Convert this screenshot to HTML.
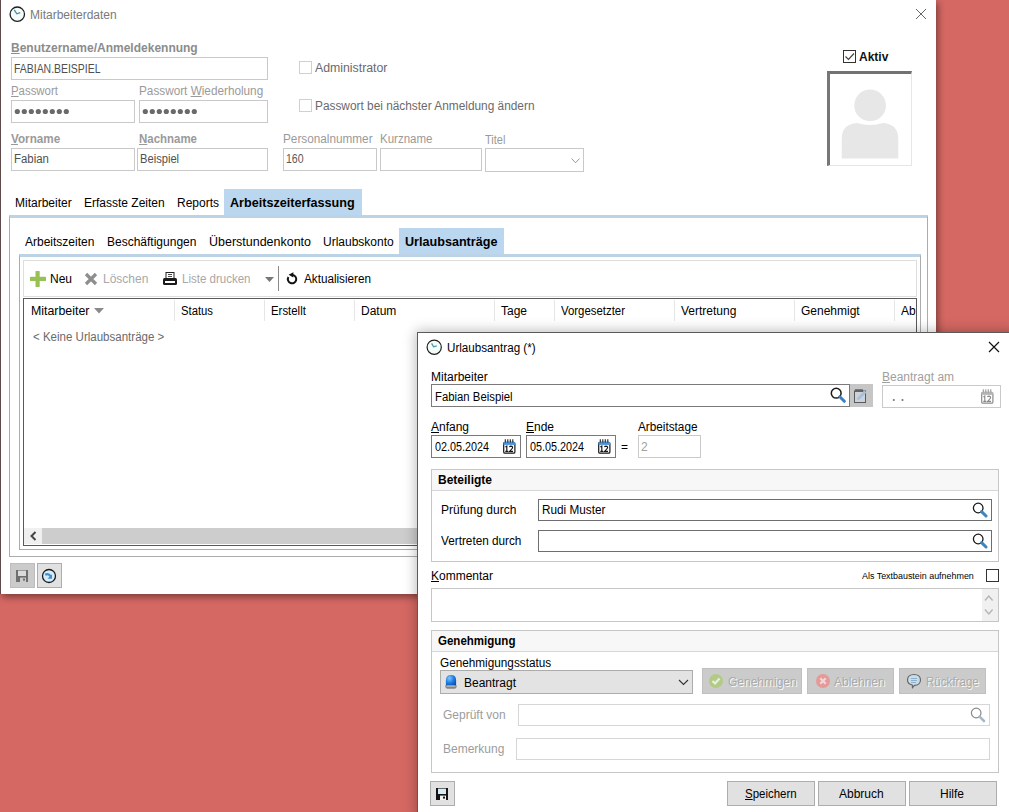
<!DOCTYPE html>
<html><head><meta charset="utf-8">
<style>
*{box-sizing:border-box}
html,body{margin:0;padding:0}
body{width:1009px;height:812px;position:relative;overflow:hidden;background:#d56863;font-family:"Liberation Sans",sans-serif;font-size:12px;color:#000}
.a{position:absolute}
.t{position:absolute;white-space:nowrap;line-height:14px;transform-origin:0 0}
.box{position:absolute;border:1px solid #abadb3;background:#fff}
.u{text-decoration:underline}
.b{font-weight:bold}
.dis{color:#aaaaaa;text-shadow:1px 1px 0 #f8f8f8}
</style></head><body>

<!-- ============ MAIN WINDOW ============ -->
<div class="a" style="left:0;top:0;width:936px;height:594px;background:#fff;box-shadow:2px 3px 7px rgba(0,0,0,0.42)"></div>
<div class="a" style="left:0;top:0;width:1px;height:594px;background:#5e4a4a"></div>
<!-- title -->
<svg class="a" style="left:9px;top:6px" width="17" height="17" viewBox="0 0 17 17"><circle cx="8.3" cy="8.2" r="7.2" fill="#f3fbfb" stroke="#1e1e1e" stroke-width="1.3"/><path d="M5.2 3.8 L7.8 7.8 L11.2 6.6" fill="none" stroke="#4f8f98" stroke-width="1.3"/></svg>
<div class="t" style="left:30px;top:8px;color:#7a7a7a">Mitarbeiterdaten</div>
<svg class="a" style="left:915px;top:8px" width="12" height="12" viewBox="0 0 12 12"><path d="M1 1 L11 11 M11 1 L1 11" stroke="#666" stroke-width="1"/></svg>

<!-- fields -->
<div class="t b" style="left:11px;top:41px;color:#8c8c8c"><span class="u">B</span>enutzername/Anmeldekennung</div>
<div class="box" style="left:11px;top:57px;width:257px;height:23px;border-color:#c9c9c9"></div>
<div class="t" style="left:14px;top:62px;color:#505050;transform:scaleX(0.87)">FABIAN.BEISPIEL</div>

<div class="t" style="left:11px;top:84px;color:#9a9a9a;transform:scaleX(0.95)"><span class="u">P</span>asswort</div>
<div class="t" style="left:139px;top:84px;color:#9a9a9a;transform:scaleX(0.98)">Passwort <span class="u">W</span>iederholung</div>
<div class="box" style="left:11px;top:100px;width:124px;height:23px;border-color:#c9c9c9"></div>
<div class="box" style="left:139px;top:100px;width:129px;height:23px;border-color:#c9c9c9"></div>
<svg class="a" style="left:14px;top:108px" width="60" height="8"><g fill="#6a6a6a"><circle cx="3.3" cy="3.5" r="2.6"/><circle cx="10.3" cy="3.5" r="2.6"/><circle cx="17.3" cy="3.5" r="2.6"/><circle cx="24.3" cy="3.5" r="2.6"/><circle cx="31.3" cy="3.5" r="2.6"/><circle cx="38.3" cy="3.5" r="2.6"/><circle cx="45.3" cy="3.5" r="2.6"/><circle cx="52.3" cy="3.5" r="2.6"/></g></svg>
<svg class="a" style="left:142px;top:108px" width="60" height="8"><g fill="#6a6a6a"><circle cx="3.3" cy="3.5" r="2.6"/><circle cx="10.3" cy="3.5" r="2.6"/><circle cx="17.3" cy="3.5" r="2.6"/><circle cx="24.3" cy="3.5" r="2.6"/><circle cx="31.3" cy="3.5" r="2.6"/><circle cx="38.3" cy="3.5" r="2.6"/><circle cx="45.3" cy="3.5" r="2.6"/><circle cx="52.3" cy="3.5" r="2.6"/></g></svg>

<div class="t b" style="left:11px;top:132px;color:#9a9a9a;transform:scaleX(0.975)"><span class="u">V</span>orname</div>
<div class="t b" style="left:139px;top:132px;color:#9a9a9a;transform:scaleX(0.955)"><span class="u">N</span>achname</div>
<div class="box" style="left:11px;top:148px;width:124px;height:23px;border-color:#c9c9c9"></div>
<div class="box" style="left:137px;top:148px;width:131px;height:23px;border-color:#c9c9c9"></div>
<div class="t" style="left:14px;top:152px;color:#505050;transform:scaleX(0.95)">Fabian</div>
<div class="t" style="left:140px;top:152px;color:#505050;transform:scaleX(0.93)">Beispiel</div>

<div class="a" style="left:299px;top:61px;width:13px;height:13px;border:1px solid #d0d0d0"></div>
<div class="t" style="left:315px;top:61px;color:#6a6a6a;transform:scaleX(1.025)">Administrator</div>
<div class="a" style="left:299px;top:99px;width:13px;height:13px;border:1px solid #d0d0d0"></div>
<div class="t" style="left:315px;top:99px;color:#6a6a6a;transform:scaleX(0.988)">Passwort bei nächster Anmeldung ändern</div>

<div class="t" style="left:283px;top:132px;color:#9a9a9a;transform:scaleX(0.98)">Personalnummer</div>
<div class="t" style="left:380px;top:132px;color:#9a9a9a;transform:scaleX(0.96)">Kurzname</div>
<div class="t" style="left:485px;top:133px;color:#9a9a9a;transform:scaleX(0.92)">Titel</div>
<div class="box" style="left:283px;top:148px;width:94px;height:23px;border-color:#c9c9c9"></div>
<div class="t" style="left:286px;top:152px;color:#5a5a5a;transform:scaleX(0.88)">160</div>
<div class="box" style="left:380px;top:148px;width:102px;height:23px;border-color:#c9c9c9"></div>
<div class="box" style="left:485px;top:148px;width:99px;height:24px;border-color:#c9c9c9"></div>
<svg class="a" style="left:571px;top:158px" width="9" height="6"><path d="M0.5 0.5 L4.5 4.8 L8.5 0.5" fill="none" stroke="#9a9a9a" stroke-width="1"/></svg>

<!-- Aktiv + photo -->
<div class="a" style="left:843px;top:50px;width:13px;height:13px;border:1px solid #333;background:#fff"></div>
<svg class="a" style="left:844px;top:51px" width="11" height="11"><path d="M1.5 5.5 L4.5 8.5 L10 2.5" fill="none" stroke="#444" stroke-width="1.2"/></svg>
<div class="t b" style="left:859px;top:50px;color:#111">Aktiv</div>
<div class="a" style="left:827px;top:71px;width:85px;height:95px;border-top:3px solid #727272;border-left:3px solid #777;border-right:1px solid #e6e6e6;border-bottom:1px solid #e6e6e6;background:#fff"></div>
<svg class="a" style="left:840px;top:89px" width="60" height="71" viewBox="0 0 60 71"><circle cx="30.1" cy="16.4" r="15.8" fill="#e7e7e7"/><path d="M1.7 69.5 L1.7 50 Q1.7 35 17 34 Q30 38 43 34 Q58.3 35 58.3 50 L58.3 69.5 Z" fill="#e7e7e7"/></svg>

<!-- tabs -->
<div class="a" style="left:224px;top:189px;width:138px;height:27px;background:#bad7ef"></div>
<div class="t" style="left:15px;top:196px">Mitarbeiter</div>
<div class="t" style="left:84px;top:196px">Erfasste Zeiten</div>
<div class="t" style="left:177px;top:196px">Reports</div>
<div class="t b" style="left:230px;top:196px;transform:scaleX(1.05)">Arbeitszeiterfassung</div>
<div class="a" style="left:9px;top:215px;width:919px;height:342px;border:1px solid #acacac;border-top:3px solid #bcd3e6"></div>

<div class="a" style="left:399px;top:228px;width:105px;height:27px;background:#bad7ef"></div>
<div class="t" style="left:25px;top:235px">Arbeitszeiten</div>
<div class="t" style="left:107px;top:235px">Beschäftigungen</div>
<div class="t" style="left:209px;top:235px;transform:scaleX(1.04)">Überstundenkonto</div>
<div class="t" style="left:323px;top:235px">Urlaubskonto</div>
<div class="t b" style="left:405px;top:235px;transform:scaleX(1.05)">Urlaubsanträge</div>
<div class="a" style="left:19px;top:254px;width:902px;height:296px;border:1px solid #acacac;border-top:3px solid #bcd3e6"></div>

<!-- toolbar -->
<div class="a" style="left:23px;top:260px;width:894px;height:37px;border:1px solid #dedede"></div>
<svg class="a" style="left:30px;top:271px" width="16" height="16" viewBox="0 0 16 16"><path d="M7.6 1.2 V14.8 M1.2 7.8 H14.8" stroke="#97c155" stroke-width="4.2" stroke-linecap="round"/></svg>
<div class="t" style="left:50px;top:272px">Neu</div>
<svg class="a" style="left:84px;top:272px" width="14" height="14" viewBox="0 0 14 14"><path d="M2 2 L12 12 M12 2 L2 12" stroke="#8e8e8e" stroke-width="3.2"/></svg>
<div class="t" style="left:103px;top:272px;color:#a8a8a8">Löschen</div>
<svg class="a" style="left:162px;top:272px" width="16" height="14" viewBox="0 0 16 14"><rect x="4" y="0.5" width="8" height="6" fill="#fff" stroke="#222" stroke-width="1"/><path d="M6 2.5 H10 M6 4.5 H10" stroke="#222" stroke-width="0.8"/><rect x="1" y="6" width="14" height="7" rx="1.5" fill="#1a1a1a"/><rect x="3" y="9" width="10" height="2" fill="#fff"/></svg>
<div class="t" style="left:182px;top:272px;color:#a8a8a8;transform:scaleX(0.96)">Liste drucken</div>
<svg class="a" style="left:265px;top:277px" width="9" height="5"><path d="M0 0 H9 L4.5 5 Z" fill="#777"/></svg>
<div class="a" style="left:278px;top:266px;width:1px;height:25px;background:#8a8a8a"></div>
<svg class="a" style="left:286px;top:272px" width="12" height="13" viewBox="0 0 12 13"><path d="M6.2 2.9 A4.2 4.2 0 1 1 2.4 5" fill="none" stroke="#111" stroke-width="2"/><path d="M2.6 2.8 L7.4 0.2 L7.3 5.6Z" fill="#111"/></svg>
<div class="t" style="left:304px;top:272px;transform:scaleX(0.975)">Aktualisieren</div>

<!-- grid -->
<div class="a" style="left:23px;top:298px;width:894px;height:248px;border:1px solid #5a5a5a"></div>
<div class="t" style="left:31px;top:304px;transform:scaleX(1.03)">Mitarbeiter</div>
<svg class="a" style="left:94px;top:308px" width="10" height="6"><path d="M0 0 H10 L5 5.5 Z" fill="#8a8a8a"/></svg>
<div class="a" style="left:174px;top:300px;width:1px;height:21px;background:#e6e6e6"></div>
<div class="t" style="left:181px;top:304px;transform:scaleX(0.94)">Status</div>
<div class="a" style="left:264px;top:300px;width:1px;height:21px;background:#e6e6e6"></div>
<div class="t" style="left:271px;top:304px;transform:scaleX(0.95)">Erstellt</div>
<div class="a" style="left:354px;top:300px;width:1px;height:21px;background:#e6e6e6"></div>
<div class="t" style="left:361px;top:304px">Datum</div>
<div class="a" style="left:494px;top:300px;width:1px;height:21px;background:#e6e6e6"></div>
<div class="t" style="left:501px;top:304px">Tage</div>
<div class="a" style="left:554px;top:300px;width:1px;height:21px;background:#e6e6e6"></div>
<div class="t" style="left:561px;top:304px;transform:scaleX(0.95)">Vorgesetzter</div>
<div class="a" style="left:674px;top:300px;width:1px;height:21px;background:#e6e6e6"></div>
<div class="t" style="left:681px;top:304px">Vertretung</div>
<div class="a" style="left:794px;top:300px;width:1px;height:21px;background:#e6e6e6"></div>
<div class="t" style="left:801px;top:304px">Genehmigt</div>
<div class="a" style="left:894px;top:300px;width:1px;height:21px;background:#e6e6e6"></div>
<div class="a" style="left:901px;top:304px;width:15px;height:16px;overflow:hidden"><div class="t" style="left:0;top:0">Ab</div></div>
<div class="t" style="left:33px;top:330px;color:#6a6a6a;transform:scaleX(0.96)">&lt; Keine Urlaubsanträge &gt;</div>

<!-- scrollbar -->
<div class="a" style="left:24px;top:528px;width:18px;height:16px;background:#f0f0f0"></div>
<div class="a" style="left:42px;top:528px;width:375px;height:16px;background:#cdcdcd"></div>
<svg class="a" style="left:29px;top:531px" width="9" height="10"><path d="M6.5 1 L2.5 5 L6.5 9" fill="none" stroke="#444" stroke-width="2"/></svg>

<!-- bottom buttons -->
<div class="a" style="left:10px;top:563px;width:25px;height:25px;background:#cbcbcb;border:1px solid #bdbdbd"></div>
<svg class="a" style="left:16px;top:570px" width="12" height="12" viewBox="0 0 12 12"><rect x="0" y="0" width="12" height="12" fill="#6e6e6e"/><rect x="2" y="0.6" width="8" height="5.4" fill="#dadada"/><rect x="4" y="7.6" width="6" height="4.4" fill="#cbcbcb"/><rect x="7" y="8.6" width="2" height="2" fill="#6e6e6e"/></svg>
<div class="a" style="left:37px;top:563px;width:25px;height:25px;background:#e1e1e1;border:1px solid #adadad"></div>
<svg class="a" style="left:41px;top:568px" width="16" height="16" viewBox="0 0 16 16"><circle cx="8" cy="8" r="6.5" fill="#d6ecfa" stroke="#1a1a1a" stroke-width="1.3"/><path d="M4.2 6.8 Q7.5 4.8 9.8 8.5" fill="none" stroke="#3b8fd3" stroke-width="2.2"/><path d="M6.5 10.8 L11 10.8 L11 6.3Z" fill="#3b8fd3"/></svg>

<!-- ============ DIALOG ============ -->
<div class="a" style="left:417px;top:332px;width:600px;height:490px;background:#fff;border-left:1px solid #5a5a5a;border-top:1px solid #5a5a5a;box-shadow:-1px -1px 12px rgba(0,0,0,0.28)"></div>
<svg class="a" style="left:426px;top:339px" width="17" height="17" viewBox="0 0 17 17"><circle cx="8.2" cy="8.2" r="7.1" fill="#f3fbfb" stroke="#1e1e1e" stroke-width="1.2"/><path d="M5.6 4.4 L7.6 7.8 L10.8 6.8" fill="none" stroke="#4f9aa0" stroke-width="1.3"/></svg>
<div class="t" style="left:447px;top:341px;transform:scaleX(0.97)">Urlaubsantrag (*)</div>
<svg class="a" style="left:988px;top:341px" width="12" height="12" viewBox="0 0 12 12"><path d="M1 1 L11 11 M11 1 L1 11" stroke="#111" stroke-width="1.2"/></svg>

<div class="t" style="left:431px;top:370px">Mitarbeiter</div>
<div class="box" style="left:431px;top:384px;width:419px;height:23px;border-color:#7a7a7a"></div>
<div class="t" style="left:435px;top:390px;transform:scaleX(0.945)">Fabian Beispiel</div>
<svg class="a" style="left:830px;top:387px" width="16" height="16" viewBox="0 0 16 16"><circle cx="6.2" cy="6.2" r="4.9" fill="#fff" stroke="#1a1a1a" stroke-width="1.5"/><path d="M9.8 9.8 L14.3 14.3" stroke="#3d7fbf" stroke-width="3" stroke-linecap="round"/></svg>
<div class="a" style="left:850px;top:384px;width:23px;height:23px;background:#c6c6c6"></div>
<svg class="a" style="left:853px;top:388px" width="16" height="16" viewBox="0 0 16 16"><rect x="1.5" y="3" width="11" height="11.5" fill="#cdd3d8" stroke="#5a5a5a"/><path d="M3 1 V4 M5 1 V4 M7 1 V4 M9 1 V4" stroke="#333"/><path d="M4.5 11.5 L12.5 3.5" stroke="#a3c2dc" stroke-width="2.8"/></svg>

<div class="t" style="left:882px;top:370px;color:#a0a0a0"><span class="u">B</span>eantragt am</div>
<div class="box" style="left:882px;top:385px;width:119px;height:23px;border-color:#cacaca"></div>
<svg class="a" style="left:892px;top:398px" width="14" height="4"><circle cx="1.8" cy="2" r="1.1" fill="#777"/><circle cx="10.5" cy="2" r="1.1" fill="#777"/></svg>
<svg class="a" style="left:981px;top:389px" width="13" height="15" viewBox="0 0 13 15"><rect x="0.7" y="3.4" width="11.2" height="10.8" rx="1.3" fill="#fff" stroke="#8a8a8a" stroke-width="1.2"/><rect x="0.5" y="3" width="11.6" height="2.9" fill="#b5b5b5"/><path d="M2.3 0.3 V3.6 M4.8 0.3 V3.6 M7.3 0.3 V3.6 M9.8 0.3 V3.6" stroke="#999" stroke-width="1.1"/><path d="M2.4 8 L3.8 7.1 V12.4 M2.3 12.4 H5.2 M6.4 8 Q6.9 7.1 8.1 7.1 Q9.6 7.2 9.6 8.5 Q9.6 9.4 6.6 12.3 H10" fill="none" stroke="#8a8a8a" stroke-width="1.15"/></svg>

<div class="t" style="left:431px;top:420px"><span class="u">A</span>nfang</div>
<div class="t" style="left:526px;top:420px"><span class="u">E</span>nde</div>
<div class="t" style="left:638px;top:420px;transform:scaleX(0.98)">Arbeitstage</div>
<div class="box" style="left:431px;top:435px;width:90px;height:23px;border-color:#7a7a7a"></div>
<div class="t" style="left:435px;top:440px;transform:scaleX(0.9)">02.05.2024</div>
<svg class="a" style="left:503px;top:439px" width="13" height="15" viewBox="0 0 13 15"><rect x="0.7" y="3.4" width="11.2" height="10.8" rx="1.3" fill="#fff" stroke="#141414" stroke-width="1.2"/><rect x="0.5" y="3" width="11.6" height="2.9" fill="#4a93d4"/><path d="M2.3 0.3 V3.6 M4.8 0.3 V3.6 M7.3 0.3 V3.6 M9.8 0.3 V3.6" stroke="#222" stroke-width="1.1"/><path d="M2.4 8 L3.8 7.1 V12.4 M2.3 12.4 H5.2 M6.4 8 Q6.9 7.1 8.1 7.1 Q9.6 7.2 9.6 8.5 Q9.6 9.4 6.6 12.3 H10" fill="none" stroke="#141414" stroke-width="1.15"/></svg>
<div class="box" style="left:526px;top:435px;width:90px;height:23px;border-color:#7a7a7a"></div>
<div class="t" style="left:530px;top:440px;transform:scaleX(0.9)">05.05.2024</div>
<svg class="a" style="left:598px;top:439px" width="13" height="15" viewBox="0 0 13 15"><rect x="0.7" y="3.4" width="11.2" height="10.8" rx="1.3" fill="#fff" stroke="#141414" stroke-width="1.2"/><rect x="0.5" y="3" width="11.6" height="2.9" fill="#4a93d4"/><path d="M2.3 0.3 V3.6 M4.8 0.3 V3.6 M7.3 0.3 V3.6 M9.8 0.3 V3.6" stroke="#222" stroke-width="1.1"/><path d="M2.4 8 L3.8 7.1 V12.4 M2.3 12.4 H5.2 M6.4 8 Q6.9 7.1 8.1 7.1 Q9.6 7.2 9.6 8.5 Q9.6 9.4 6.6 12.3 H10" fill="none" stroke="#141414" stroke-width="1.15"/></svg>
<div class="t" style="left:621px;top:440px">=</div>
<div class="box" style="left:638px;top:435px;width:63px;height:23px;border-color:#cacaca"></div>
<div class="t" style="left:641px;top:440px;color:#a0a0a0">2</div>

<!-- Beteiligte -->
<div class="a" style="left:431px;top:469px;width:568px;height:93px;border:1px solid #c6c6c6"></div>
<div class="a" style="left:432px;top:470px;width:566px;height:21px;background:#f7f7f7;border-bottom:1px solid #d6d6d6"></div>
<div class="t b" style="left:438px;top:473px">Beteiligte</div>
<div class="t" style="left:441px;top:503px">Prüfung durch</div>
<div class="box" style="left:538px;top:499px;width:454px;height:22px;border-color:#6e6e6e"></div>
<div class="t" style="left:542px;top:503px;transform:scaleX(0.98)">Rudi Muster</div>
<svg class="a" style="left:972px;top:502px" width="16" height="16" viewBox="0 0 16 16"><circle cx="6.2" cy="6" r="4.8" fill="#fff" stroke="#1a1a1a" stroke-width="1.3"/><path d="M9.6 9.6 L14 14" stroke="#3f86bd" stroke-width="3" stroke-linecap="round"/></svg>
<div class="t" style="left:441px;top:534px;transform:scaleX(0.98)">Vertreten durch</div>
<div class="box" style="left:538px;top:530px;width:454px;height:22px;border-color:#6e6e6e"></div>
<svg class="a" style="left:972px;top:533px" width="16" height="16" viewBox="0 0 16 16"><circle cx="6.2" cy="6" r="4.8" fill="#fff" stroke="#1a1a1a" stroke-width="1.3"/><path d="M9.6 9.6 L14 14" stroke="#3f86bd" stroke-width="3" stroke-linecap="round"/></svg>

<!-- Kommentar -->
<div class="t" style="left:431px;top:569px"><span class="u">K</span>ommentar</div>
<div class="t" style="left:862px;top:570px;font-size:9.2px;line-height:12px;transform:scaleX(0.97)">Als Textbaustein aufnehmen</div>
<div class="a" style="left:986px;top:569px;width:13px;height:13px;border:1px solid #333"></div>
<div class="box" style="left:431px;top:588px;width:568px;height:34px;border-color:#c6c6c6"></div>
<div class="a" style="left:982px;top:589px;width:16px;height:32px;background:#f0f0f0"></div>
<svg class="a" style="left:984px;top:593px" width="10" height="24"><path d="M1 7.5 L4.8 3 L8.6 7.5 M1 16.5 L4.8 21 L8.6 16.5" fill="none" stroke="#b5b5b5" stroke-width="1.4"/></svg>

<!-- Genehmigung -->
<div class="a" style="left:431px;top:630px;width:568px;height:143px;border:1px solid #c6c6c6"></div>
<div class="a" style="left:432px;top:631px;width:566px;height:21px;background:#f7f7f7;border-bottom:1px solid #d6d6d6"></div>
<div class="t b" style="left:438px;top:634px;transform:scaleX(0.96)">Genehmigung</div>
<div class="t" style="left:440px;top:656px;transform:scaleX(0.98)">Genehmigungsstatus</div>
<div class="a" style="left:440px;top:670px;width:253px;height:24px;background:#e3e3e3;border:1px solid #acacac"></div>
<svg class="a" style="left:444px;top:674px" width="14" height="16" viewBox="0 0 14 16"><defs><radialGradient id="bl" cx="0.35" cy="0.3" r="0.8"><stop offset="0" stop-color="#7cc8ff"/><stop offset="0.55" stop-color="#1f7ae0"/><stop offset="1" stop-color="#0d4aa8"/></radialGradient></defs><path d="M1.9 12 L1.9 6.2 Q1.9 1 7 1 Q12.1 1 12.1 6.2 L12.1 12Z" fill="url(#bl)"/><path d="M1.2 11.6 H12.8 Q12.8 14.7 10.5 14.7 H3.5 Q1.2 14.7 1.2 11.6Z" fill="#8a8480"/><path d="M2.5 12 H11.5" stroke="#d8eef8" stroke-width="0.8"/></svg>
<div class="t" style="left:464px;top:676px">Beantragt</div>
<svg class="a" style="left:678px;top:679px" width="11" height="7"><path d="M1 1 L5.5 5.5 L10 1" fill="none" stroke="#333" stroke-width="1.1"/></svg>

<div class="a" style="left:702px;top:668px;width:100px;height:26px;background:#cbcbcb;border:1px solid #c0c0c0"></div>
<svg class="a" style="left:708px;top:673px" width="16" height="16" viewBox="0 0 16 16"><circle cx="8" cy="8" r="7" fill="#b3ca86"/><path d="M4.5 8 L7 10.5 L11.5 5.5" fill="none" stroke="#e8f0dc" stroke-width="2.2"/></svg>
<div class="t dis" style="left:728px;top:675px">Genehmigen</div>
<div class="a" style="left:807px;top:668px;width:87px;height:26px;background:#cbcbcb;border:1px solid #c0c0c0"></div>
<svg class="a" style="left:815px;top:673px" width="16" height="16" viewBox="0 0 16 16"><circle cx="8" cy="8" r="7" fill="#e49a98"/><path d="M5.3 5.3 L10.7 10.7 M10.7 5.3 L5.3 10.7" stroke="#f4d6d6" stroke-width="2.2"/></svg>
<div class="t dis" style="left:834px;top:675px">Ablehnen</div>
<div class="a" style="left:899px;top:668px;width:87px;height:26px;background:#cbcbcb;border:1px solid #c0c0c0"></div>
<svg class="a" style="left:906px;top:673px" width="16" height="16" viewBox="0 0 16 16"><path d="M8 1.5 C12 1.5 14.5 3.8 14.5 7 C14.5 10.2 12 12.3 8.5 12.3 L6.5 14.5 L6.3 12 C3.3 11.4 1.5 9.5 1.5 7 C1.5 3.8 4 1.5 8 1.5Z" fill="#c9dcea" stroke="#666" stroke-width="1.2"/><path d="M5 5.5 H11 M5 7.5 H11 M5 9.5 H10" stroke="#8fb0cc" stroke-width="1"/></svg>
<div class="t dis" style="left:926px;top:675px;transform:scaleX(0.965)">Rückfrage</div>

<div class="t" style="left:443px;top:708px;color:#9c9c9c">Geprüft von</div>
<div class="box" style="left:518px;top:704px;width:472px;height:22px;border-color:#d6d6d6"></div>
<svg class="a" style="left:970px;top:707px" width="16" height="16" viewBox="0 0 16 16"><circle cx="6.2" cy="6" r="4.8" fill="#fff" stroke="#8a8a8a" stroke-width="1.2"/><path d="M9.6 9.6 L14 14" stroke="#a8b8c6" stroke-width="2.6" stroke-linecap="round"/></svg>
<div class="t" style="left:443px;top:742px;color:#9c9c9c">Bemerkung</div>
<div class="box" style="left:516px;top:738px;width:474px;height:22px;border-color:#d6d6d6"></div>

<!-- bottom -->
<div class="a" style="left:430px;top:781px;width:25px;height:25px;background:#e1e1e1;border:1px solid #adadad"></div>
<svg class="a" style="left:436px;top:788px" width="12" height="12" viewBox="0 0 12 12"><rect x="0" y="0" width="12" height="12" fill="#141414"/><rect x="2" y="0.6" width="8" height="5.4" fill="#d8ebf5"/><rect x="4" y="7.6" width="6" height="4.4" fill="#f2f2f2"/><rect x="7" y="8.6" width="2" height="2" fill="#141414"/></svg>
<div class="a" style="left:727px;top:781px;width:88px;height:25px;background:#e1e1e1;border:1px solid #adadad"></div>
<div class="t" style="left:745px;top:787px;transform:scaleX(0.955)"><span class="u">S</span>peichern</div>
<div class="a" style="left:818px;top:781px;width:88px;height:25px;background:#e1e1e1;border:1px solid #adadad"></div>
<div class="t" style="left:839px;top:787px">Abbruch</div>
<div class="a" style="left:909px;top:781px;width:88px;height:25px;background:#e1e1e1;border:1px solid #adadad"></div>
<div class="t" style="left:940px;top:787px">Hilfe</div>

</body></html>
